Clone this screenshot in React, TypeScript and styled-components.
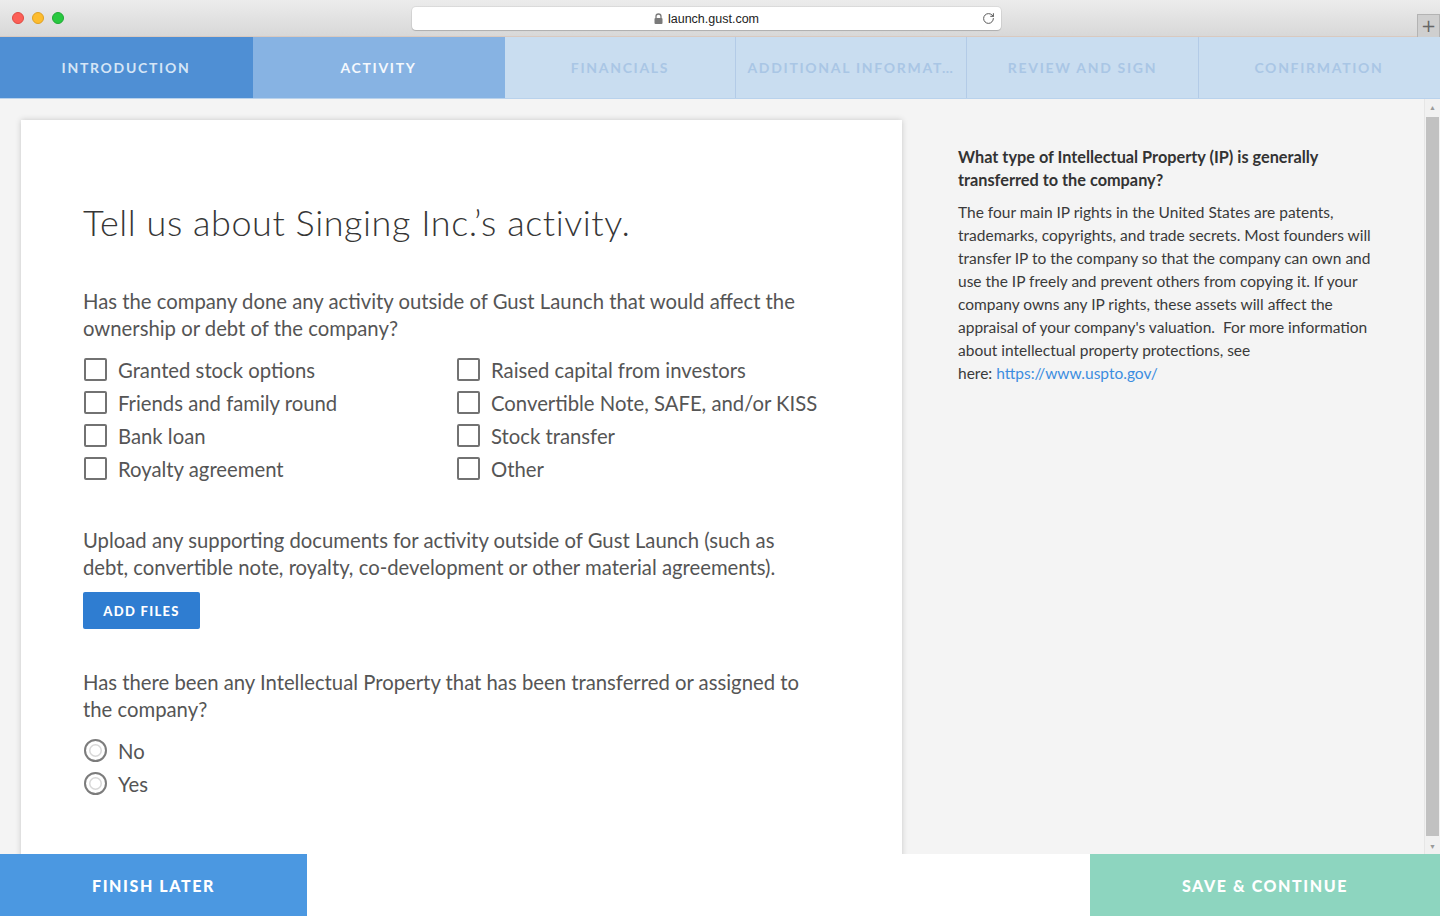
import React from 'react';
import styled, { createGlobalStyle } from 'styled-components';
import { RotateCw } from 'lucide-react';

const GlobalStyle = createGlobalStyle`
    html, body {
        margin: 0;
        padding: 0;
        overflow: hidden;
    }
    body {
        font-family: Lato, 'Open Sans', sans-serif;
        color: #444;
    }
    * {
        box-sizing: border-box;
    }
`;

type TabState = 'done' | 'current' | 'todo';

const TABS: { label: string; state: TabState; width: number }[] = [
    { label: 'INTRODUCTION', state: 'done', width: 253 },
    { label: 'ACTIVITY', state: 'current', width: 252 },
    { label: 'FINANCIALS', state: 'todo', width: 231 },
    { label: 'ADDITIONAL INFORMAT…', state: 'todo', width: 231 },
    { label: 'REVIEW AND SIGN', state: 'todo', width: 232 },
    { label: 'CONFIRMATION', state: 'todo', width: 241 },
];

const LEFT_OPTIONS = ['Granted stock options', 'Friends and family round', 'Bank loan', 'Royalty agreement'];
const RIGHT_OPTIONS = ['Raised capital from investors', 'Convertible Note, SAFE, and/or KISS', 'Stock transfer', 'Other'];

const App: React.FC = () => {
    return (
        <Page>
            <GlobalStyle />
            <Chrome>
                <Lights>
                    <Light color="#fc5f57" border="#de4a42" />
                    <Light color="#fdbc2e" border="#dea123" />
                    <Light color="#28c840" border="#1fa934" />
                </Lights>
                <UrlField>
                    <UrlText>
                        <svg width="9" height="11" viewBox="0 0 9 11">
                            <path d="M2 5V3.5a2.5 2.5 0 0 1 5 0V5" fill="none" stroke="#7a7a7a" strokeWidth="1.3" />
                            <rect x="0.5" y="5" width="8" height="6" rx="1" fill="#7a7a7a" />
                        </svg>
                        launch.gust.com
                    </UrlText>
                    <Reload>
                        <RotateCw size={13} color="#555" strokeWidth={1.8} />
                    </Reload>
                </UrlField>
                <NewTab>+</NewTab>
            </Chrome>

            <Tabs>
                {TABS.map((tab, index) => (
                    <Tab
                        key={tab.label}
                        state={tab.state}
                        divider={tab.state === 'todo' && index < TABS.length - 1}
                        style={{ width: tab.width }}
                    >
                        {tab.label}
                    </Tab>
                ))}
            </Tabs>

            <Main>
                <Card>
                    <Title>Tell us about Singing Inc.’s activity.</Title>
                    <Question>
                        Has the company done any activity outside of Gust Launch that would affect the ownership or debt
                        of the company?
                    </Question>
                    <OptionGrid>
                        <OptionColumn>
                            {LEFT_OPTIONS.map((option) => (
                                <Option key={option}>
                                    <Checkbox />
                                    {option}
                                </Option>
                            ))}
                        </OptionColumn>
                        <OptionColumn>
                            {RIGHT_OPTIONS.map((option) => (
                                <Option key={option}>
                                    <Checkbox />
                                    {option}
                                </Option>
                            ))}
                        </OptionColumn>
                    </OptionGrid>

                    <UploadText>
                        Upload any supporting documents for activity outside of Gust Launch (such as debt, convertible
                        note, royalty, co-development or other material agreements).
                    </UploadText>
                    <AddFiles>ADD FILES</AddFiles>

                    <IpQuestion>
                        Has there been any Intellectual Property that has been transferred or assigned to the company?
                    </IpQuestion>
                    <RadioList>
                        <Option>
                            <Radio />
                            No
                        </Option>
                        <Option>
                            <Radio />
                            Yes
                        </Option>
                    </RadioList>
                </Card>

                <Sidebar>
                    <SideTitle>What type of Intellectual Property (IP) is generally transferred to the company?</SideTitle>
                    <SideText>
                        The four main IP rights in the United States are patents, trademarks, copyrights, and trade
                        secrets. Most founders will transfer IP to the company so that the company can own and use the
                        IP freely and prevent others from copying it. If your company owns any IP rights, these assets
                        will affect the appraisal of your company's valuation.&nbsp; For more information about
                        intellectual property protections, see <LinkLine>here: <SideLink>https://www.uspto.gov/</SideLink></LinkLine>
                    </SideText>
                </Sidebar>

                <Scrollbar>
                    <ScrollArrow>▲</ScrollArrow>
                    <ScrollThumb />
                    <ScrollArrow>▼</ScrollArrow>
                </Scrollbar>
            </Main>

            <Footer>
                <FooterButton bg="#4b98e1" width={307}>
                    FINISH LATER
                </FooterButton>
                <FooterButton bg="#8dd5bf" width={350}>
                    SAVE &amp; CONTINUE
                </FooterButton>
            </Footer>
        </Page>
    );
};

const Page = styled.div`
    display: flex;
    flex-direction: column;
    width: 1440px;
    height: 916px;
    overflow: hidden;
    background: #fff;
`;

const Chrome = styled.div`
    height: 37px;
    flex: none;
    display: flex;
    align-items: flex-start;
    background: linear-gradient(#ececec, #d8d8d8);
    border-bottom: 1px solid #d9c9bf;
    position: relative;
`;

const Lights = styled.div`
    display: flex;
    gap: 8px;
    padding: 12px 0 0 12px;
    width: 412px;
`;

const Light = styled.span<{ color: string; border: string }>`
    width: 12px;
    height: 12px;
    border-radius: 50%;
    background: ${(props) => props.color};
    border: 1px solid ${(props) => props.border};
`;

const UrlField = styled.div`
    margin-top: 7px;
    width: 589px;
    height: 23px;
    background: #fff;
    border-radius: 4px;
    box-shadow: 0 0 0 1px rgba(0, 0, 0, 0.06), 0 1px 1px rgba(0, 0, 0, 0.15);
    display: flex;
    align-items: center;
    justify-content: center;
    position: relative;
`;

const UrlText = styled.span`
    display: flex;
    align-items: center;
    gap: 5px;
    font-family: 'Liberation Sans', Arial, sans-serif;
    font-size: 12.5px;
    color: #222;
`;

const Reload = styled.span`
    position: absolute;
    right: 6px;
    top: 5px;
    display: flex;
`;

const NewTab = styled.div`
    margin-left: auto;
    margin-top: 14px;
    width: 23px;
    height: 23px;
    background: #cfcfcf;
    border: 1px solid #b3b3b3;
    border-bottom: none;
    color: #666;
    font-family: 'DejaVu Sans', sans-serif;
    font-size: 18px;
    line-height: 21px;
    text-align: center;
`;

const Tabs = styled.div`
    height: 62px;
    flex: none;
    display: flex;
    background: #c9ddf0;
    border-bottom: 1px solid #b9d2ec;
`;

const Tab = styled.div<{ state: TabState; divider: boolean }>`
    display: flex;
    align-items: center;
    justify-content: center;
    font-size: 14px;
    font-weight: 700;
    letter-spacing: 1.7px;
    white-space: nowrap;
    background: ${(props) =>
        props.state === 'done' ? '#4f8fd4' : props.state === 'current' ? '#87b3e3' : '#c9ddf0'};
    color: ${(props) => (props.state === 'done' ? '#d5e5f6' : props.state === 'current' ? '#f4f8fd' : '#a9c6e5')};
    border-right: 1px solid ${(props) => (props.divider ? '#b3cbe7' : 'transparent')};
`;

const Main = styled.div`
    flex: 1;
    min-height: 0;
    display: flex;
    align-items: flex-start;
    background: #f4f4f4;
    overflow: hidden;
`;

const Card = styled.div`
    flex: none;
    width: 881px;
    margin: 21px 0 0 21px;
    padding: 80px 62px 80px;
    background: #fff;
    box-shadow: 0 0 6px rgba(0, 0, 0, 0.18);
    color: #555;
`;

const Title = styled.h1`
    margin: 0;
    font-size: 36px;
    line-height: 44px;
    font-weight: 300;
    color: #363636;
    letter-spacing: 0.55px;
`;

const Question = styled.p`
    margin: 44px 0 0;
    font-size: 20.3px;
    line-height: 27px;
    color: #555;
    max-width: 730px;
`;

const OptionGrid = styled.div`
    display: grid;
    grid-template-columns: 373px 1fr;
    margin-top: 11px;
`;

const OptionColumn = styled.div`
    display: flex;
    flex-direction: column;
`;

const Option = styled.label`
    display: flex;
    align-items: center;
    gap: 11px;
    height: 33px;
    font-size: 20.3px;
    color: #555;
`;

const Checkbox = styled.span`
    width: 23px;
    height: 23px;
    flex: none;
    border: 2px solid #727272;
    border-radius: 2px;
    margin-left: 1px;
`;

const Radio = styled.span`
    width: 23px;
    height: 23px;
    flex: none;
    border: 2px solid #7c7c7c;
    border-radius: 50%;
    margin-left: 1px;
    box-shadow: inset 0 0 0 3px #fff, inset 0 0 0 4.5px #d8d8d8;
`;

const UploadText = styled(Question)`
    margin-top: 42px;
`;

const AddFiles = styled.button`
    display: block;
    margin-top: 11px;
    width: 117px;
    height: 37px;
    border: none;
    border-radius: 2px;
    background: #2f7dd1;
    color: #fff;
    font-family: Lato, sans-serif;
    font-size: 13px;
    font-weight: 900;
    letter-spacing: 1.3px;
`;

const IpQuestion = styled(Question)`
    margin-top: 40px;
`;

const RadioList = styled.div`
    display: flex;
    flex-direction: column;
    margin-top: 11px;
`;

const Sidebar = styled.div`
    width: 482px;
    flex: none;
    padding: 46px 0 0 56px;
    color: #333;
`;

const SideTitle = styled.h3`
    margin: 0;
    font-size: 16.3px;
    line-height: 23px;
    font-weight: 700;
    color: #333;
`;

const SideText = styled.p`
    margin: 10px 0 0;
    font-size: 15.5px;
    line-height: 23px;
    color: #3a3a3a;
`;

const LinkLine = styled.span`
    white-space: nowrap;
`;

const SideLink = styled.a`
    color: #3b8de0;
    text-decoration: none;
`;

const Scrollbar = styled.div`
    margin-left: auto;
    width: 16px;
    flex: none;
    align-self: stretch;
    display: flex;
    flex-direction: column;
    align-items: center;
    background: #f1f1f1;
    border-left: 1px solid #e6e6e6;
`;

const ScrollArrow = styled.span`
    height: 16px;
    font-size: 7px;
    line-height: 16px;
    color: #9a9a9a;
`;

const ScrollThumb = styled.div`
    flex: 1;
    width: 13px;
    margin: 2px 0;
    background: #c1c1c1;
`;

const Footer = styled.div`
    height: 62px;
    flex: none;
    display: flex;
    justify-content: space-between;
    background: #fff;
`;

const FooterButton = styled.div<{ bg: string; width: number }>`
    width: ${(props) => props.width}px;
    display: flex;
    align-items: center;
    justify-content: center;
    background: ${(props) => props.bg};
    color: #fff;
    font-size: 16px;
    font-weight: 900;
    letter-spacing: 1.6px;
`;

export default App;
